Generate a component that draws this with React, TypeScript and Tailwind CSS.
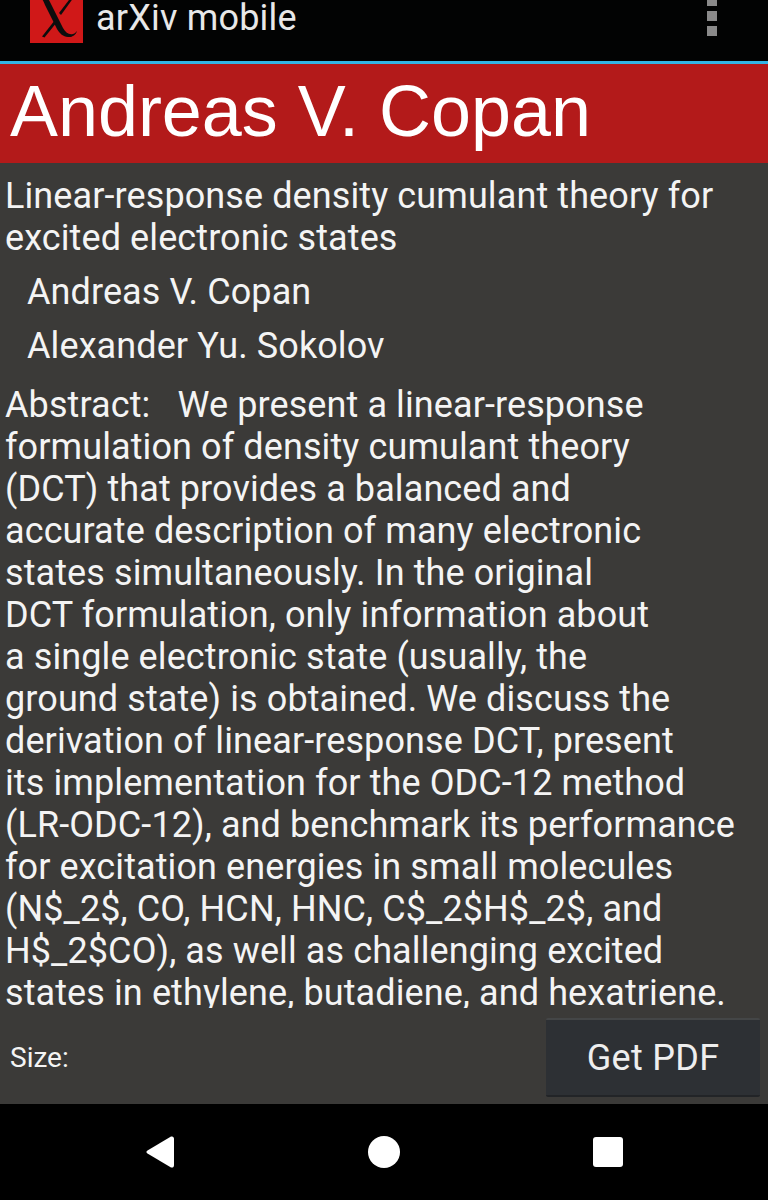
const abstractLines = [
  "Abstract:   We present a linear-response",
  "formulation of density cumulant theory",
  "(DCT) that provides a balanced and",
  "accurate description of many electronic",
  "states simultaneously. In the original",
  "DCT formulation, only information about",
  "a single electronic state (usually, the",
  "ground state) is obtained. We discuss the",
  "derivation of linear-response DCT, present",
  "its implementation for the ODC-12 method",
  "(LR-ODC-12), and benchmark its performance",
  "for excitation energies in small molecules",
  "(N$_2$, CO, HCN, HNC, C$_2$H$_2$, and",
  "H$_2$CO), as well as challenging excited",
  "states in ethylene, butadiene, and hexatriene.",
];

function Logo() {
  return (
    <div className="w-[53px] h-[53px] bg-[#d01818] overflow-hidden">
      <svg viewBox="0 0 53 53" className="w-[53px] h-[53px]">
        <path
          d="M8 3 C13 2 17 6 20 12 L33 38 C36 43 39 45 43 44 C45 43.5 46 42 47 41 C46 45 42 47.5 38 47 C33 46.5 30 44 27 39 L15 15 C13 10 11 6 7 6 Z"
          fill="#0d0d0d"
        />
        <path d="M12 46.5 L25 30 L27 32 L14.5 47.5 Z" fill="#0d0d0d" />
        <path d="M29 23 L42 6 L44 7 L31 25 Z" fill="#0d0d0d" />
      </svg>
    </div>
  );
}

export default function App() {
  return (
    <div className="w-[768px] h-[1200px] flex flex-col bg-[#3b3a38] text-white overflow-hidden font-['Roboto',sans-serif]">
      <header className="h-[61px] shrink-0 bg-[#020303] flex items-end justify-between pb-[18px] pl-[30px] pr-[51px] overflow-hidden">
        <div className="flex items-end">
          <Logo />
          <span className="ml-[13px] text-[36px] leading-[42px] tracking-[0.2px] text-[#e8e8e8] mb-[4px]">arXiv mobile</span>
        </div>
        <div className="flex flex-col gap-[5px] mb-[7px]">
          <span className="w-[10px] h-[10px] bg-[#8a8a8a]" />
          <span className="w-[10px] h-[10px] bg-[#8a8a8a]" />
          <span className="w-[10px] h-[10px] bg-[#8a8a8a]" />
        </div>
      </header>
      <div className="h-[3px] shrink-0 bg-[#33b5e5]" />
      <div className="h-[99px] shrink-0 bg-[#b31a1a] flex items-center pl-[10px] pb-[6px] font-['Liberation_Sans',sans-serif] text-[71.9px] leading-[84px]">
        Andreas V. Copan
      </div>
      <main className="flex-1 min-h-0 flex flex-col pl-[5px] pr-[6px] text-[36px] leading-[42px] tracking-[0.1px] text-[#f4f4f4]">
        <h2 className="mt-[12px]">
          Linear-response density cumulant theory for
          <br />
          excited electronic states
        </h2>
        <p className="mt-[12px] pl-[22px]">Andreas V. Copan</p>
        <p className="mt-[12px] pl-[22px]">Alexander Yu. Sokolov</p>
        <div className="mt-[17px] h-[624px] overflow-hidden">
          {abstractLines.map((line) => (
            <div key={line} className="whitespace-pre">
              {line}
            </div>
          ))}
        </div>
        <div className="flex items-center justify-between mt-[10px] pl-[5px] pr-[2px]">
          <span className="text-[28px] leading-[30px] tracking-normal">Size:</span>
          <button className="w-[214px] h-[79px] bg-[#2d3034] border-t-2 border-t-[#444647] border-b-2 border-b-[#222427] rounded-[2px] text-[36px] leading-[40px] tracking-[0.3px] text-[#eeeeee]">
            Get PDF
          </button>
        </div>
      </main>
      <nav className="h-[96px] shrink-0 bg-black flex items-start pt-[32px] pl-[146px] text-white">
        <svg viewBox="0 0 28 32" className="w-[28px] h-[32px]">
          <path
            d="M25 0.6 C26.8 0 28 1 28 3 L28 29 C28 31 26.8 32 25 31.4 L1.5 17.5 C0 16.6 0 15.4 1.5 14.5 Z"
            fill="#fff"
          />
        </svg>
        <div className="ml-[194px] w-[32px] h-[32px] rounded-full bg-white" />
        <div className="ml-[193px] mt-[1px] w-[30px] h-[30px] rounded-[3px] bg-white" />
      </nav>
    </div>
  );
}
